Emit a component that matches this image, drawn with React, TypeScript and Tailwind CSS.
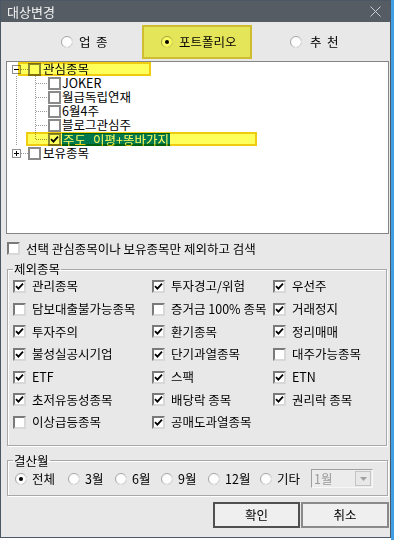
import React from "react";

function Radio({ on = false }: { on?: boolean }) {
  return (
    <svg width="12" height="12" viewBox="0 0 12 12" className="shrink-0">
      <circle cx="6" cy="6" r="5.5" fill="#fdfdfd" stroke="#a4a4a4" />
      <path d="M2.2 10 A5.5 5.5 0 0 0 10 2.2" fill="none" stroke="#e4e4e4" strokeWidth="1" />
      {on && <circle cx="6" cy="6" r="2" fill="#000" />}
    </svg>
  );
}

function Check({ on = false }: { on?: boolean }) {
  return (
    <span className="w-[13px] h-[13px] shrink-0 bg-white border-[2px] border-t-[#7a7a7a] border-l-[#7a7a7a] border-r-[#d8d8d8] border-b-[#d8d8d8] flex items-center justify-center">
      {on && (
        <svg width="9" height="9" viewBox="0 0 9 9">
          <path d="M1 4.2 L3.4 6.6 L8 1.6" stroke="#000" strokeWidth="1.8" fill="none" />
        </svg>
      )}
    </span>
  );
}

function TreeCheck({ on = false }: { on?: boolean }) {
  return (
    <span className="w-[13px] h-[13px] shrink-0 bg-white border-[2px] border-[#8a8a8a] flex items-center justify-center">
      {on && (
        <svg width="9" height="9" viewBox="0 0 9 9">
          <path d="M1 4.2 L3.4 6.6 L8 1.6" stroke="#000" strokeWidth="1.8" fill="none" />
        </svg>
      )}
    </span>
  );
}

function Expander({ plus = false }: { plus?: boolean }) {
  return (
    <span className="w-[9px] h-[9px] shrink-0 bg-white border border-[#8f8f8f] flex items-center justify-center">
      <svg width="7" height="7" viewBox="0 0 7 7">
        <path d="M1 3.5 H6" stroke="#000" strokeWidth="1" />
        {plus && <path d="M3.5 1 V6" stroke="#000" strokeWidth="1" />}
      </svg>
    </span>
  );
}

function Guide({ last = false }: { last?: boolean }) {
  return (
    <svg width="41" height="14" viewBox="0 0 41 14" className="shrink-0">
      <path d="M9.5 0 V14" stroke="#9a9a9a" strokeDasharray="1 1" />
      <path d={last ? "M28.5 0 V7" : "M28.5 0 V14"} stroke="#9a9a9a" strokeDasharray="1 1" />
      <path d="M29 7.5 H41" stroke="#9a9a9a" strokeDasharray="1 1" />
    </svg>
  );
}

function Hl({ cls }: { cls: string }) {
  return <span className={"absolute top-0 h-[14px] bg-[#ffff5c] mix-blend-multiply border-[2px] border-[#f0cc10] " + cls} />;
}

const rows: [boolean, string][][] = [
  [[true, "관리종목"], [true, "투자경고/위험"], [true, "우선주"]],
  [[false, "담보대출불가능종목"], [false, "증거금 100% 종목"], [true, "거래정지"]],
  [[true, "투자주의"], [true, "환기종목"], [true, "정리매매"]],
  [[true, "불성실공시기업"], [true, "단기과열종목"], [false, "대주가능종목"]],
  [[true, "ETF"], [true, "스팩"], [true, "ETN"]],
  [[true, "초저유동성종목"], [true, "배당락 종목"], [true, "권리락 종목"]],
  [[false, "이상급등종목"], [true, "공매도과열종목"]],
];

const months: [string, string, boolean][] = [
  ["전체", "w-[53px]", true],
  ["3월", "w-[47px]", false],
  ["6월", "w-[46px]", false],
  ["9월", "w-[47px]", false],
  ["12월", "w-[52px]", false],
  ["기타", "w-[51px]", false],
];

export default function App() {
  return (
    <div className="w-[394px] h-[540px] bg-white flex font-['Noto_Sans_CJK_KR',sans-serif] text-[12.5px] leading-[14px] text-black">
      <div className="w-[391px] h-[538px] border border-[#4c5765] bg-[#e8e8e8] flex flex-col">
        {/* title bar */}
        <div className="h-[21px] bg-[#555c64] flex items-center pl-[6px] pr-[9px] shrink-0">
          <span className="text-[13px] text-[#f2f2f2] leading-[16px]">대상변경</span>
          <svg width="11" height="11" viewBox="0 0 11 11" className="ml-auto">
            <path d="M0.5 0.5 L10.5 10.5 M10.5 0.5 L0.5 10.5" stroke="#c9ced4" strokeWidth="1" />
          </svg>
        </div>

        {/* top radio row */}
        <div className="flex items-center mt-[3px] h-[34px] pl-[60px] text-[12.5px] shrink-0">
          <div className="w-[81px] flex items-center gap-[6px]">
            <Radio />
            <span className="whitespace-pre">업  종</span>
          </div>
          <div className="relative w-[110px] h-[34px] flex items-center pl-[19px] gap-[6px]">
            <Radio on />
            <span>포트폴리오</span>
            <span className="absolute inset-0 bg-[#fcfc62] mix-blend-multiply border-[2px] border-[#e4cf36]" />
          </div>
          <div className="ml-[38px] flex items-center gap-[8px]">
            <Radio />
            <span className="whitespace-pre">추  천</span>
          </div>
        </div>

        {/* tree */}
        <div className="mt-[2px] ml-[5px] w-[383px] h-[173px] bg-white border border-[#858585] shrink-0 flex flex-col isolate text-[12.5px]">
          <div className="relative flex items-center h-[14px] pl-[5px]">
            <Expander />
            <svg width="7" height="14" viewBox="0 0 7 14" className="shrink-0">
              <path d="M0 7.5 H7" stroke="#9a9a9a" strokeDasharray="1 1" />
            </svg>
            <TreeCheck />
            <span className="ml-[2px]">관심종목</span>
            <Hl cls="left-[11px] w-[133px]" />
          </div>
          {["JOKER", "월급독립연재", "6월4주", "블로그관심주"].map((t) => (
            <div key={t} className="flex items-center h-[14px]">
              <Guide />
              <TreeCheck />
              <span className="ml-[1px]">{t}</span>
            </div>
          ))}
          <div className="relative flex items-center h-[14px]">
            <Guide last />
            <TreeCheck on />
            <span className="ml-[1px] bg-[#0078d7] text-white px-[1px] leading-[13px]">주도_이평+똥바가지</span>
            <Hl cls="left-[19px] w-[231px]" />
          </div>
          <div className="flex items-center h-[14px] pl-[5px]">
            <Expander plus />
            <svg width="7" height="14" viewBox="0 0 7 14" className="shrink-0">
              <path d="M0 7.5 H7" stroke="#9a9a9a" strokeDasharray="1 1" />
            </svg>
            <TreeCheck />
            <span className="ml-[2px]">보유종목</span>
          </div>
        </div>

        {/* exclude selected */}
        <div className="mt-[8px] ml-[6px] h-[13px] flex items-center gap-[6px] shrink-0">
          <Check />
          <span>선택 관심종목이나 보유종목만 제외하고 검색</span>
        </div>

        {/* 제외종목 */}
        <fieldset className="mt-[7px] ml-[6px] w-[380px] border border-[#a8a8a8] shadow-[inset_1px_1px_0_#fff,1px_1px_0_#fff] pb-[11px] shrink-0">
          <legend className="ml-[5px] px-[1px] leading-[14px]">제외종목</legend>
          <div className="flex flex-col pl-[5px] -mt-[1px]">
            {rows.map((r, i) => (
              <div key={i} className="flex items-center h-[22.7px]">
                {r.map(([on, t], j) => (
                  <div key={j} className={"flex items-center gap-[6px] " + (j === 0 ? "w-[139px]" : j === 1 ? "w-[121px]" : "")}>
                    <Check on={on} />
                    <span className="whitespace-nowrap">{t}</span>
                  </div>
                ))}
              </div>
            ))}
          </div>
        </fieldset>

        {/* 결산월 */}
        <fieldset className="mt-[8px] ml-[6px] w-[381px] border border-[#a8a8a8] shadow-[inset_1px_1px_0_#fff,1px_1px_0_#fff] pb-[5px] shrink-0">
          <legend className="ml-[5px] px-[1px] leading-[14px]">결산월</legend>
          <div className="flex items-center h-[22px] pl-[7px]">
            {months.map(([t, w, on]) => (
              <div key={t} className={"flex items-center gap-[5px] " + w}>
                <Radio on={on} />
                <span>{t}</span>
              </div>
            ))}
            <div className="w-[62px] h-[19px] border border-t-[#a0a0a0] border-l-[#a0a0a0] border-r-[#f8f8f8] border-b-[#f8f8f8] bg-[#ececec] flex items-center">
              <span className="pl-[2px] text-[#9a9a9a]">1월</span>
              <span className="ml-auto mr-[1px] w-[16px] h-[15px] bg-[#e8e8e8] border border-[#c4c4c4] flex items-center justify-center">
                <svg width="7" height="4" viewBox="0 0 7 4">
                  <path d="M0 0 H7 L3.5 4 Z" fill="#a0a0a0" />
                </svg>
              </span>
            </div>
          </div>
        </fieldset>

        {/* buttons */}
        <div className="mt-[6px] flex justify-end pr-[1px] shrink-0">
          <button className="w-[87px] h-[26px] bg-[#efefef] border-[2px] border-[#505050] flex items-center justify-center">확인</button>
          <button className="ml-[1px] w-[88px] h-[26px] bg-[#efefef] border-[2px] border-[#8a8a8a] flex items-center justify-center">취소</button>
        </div>
      </div>
      <div className="w-[3px] h-[540px] bg-[#3f9fe2]" />
    </div>
  );
}
